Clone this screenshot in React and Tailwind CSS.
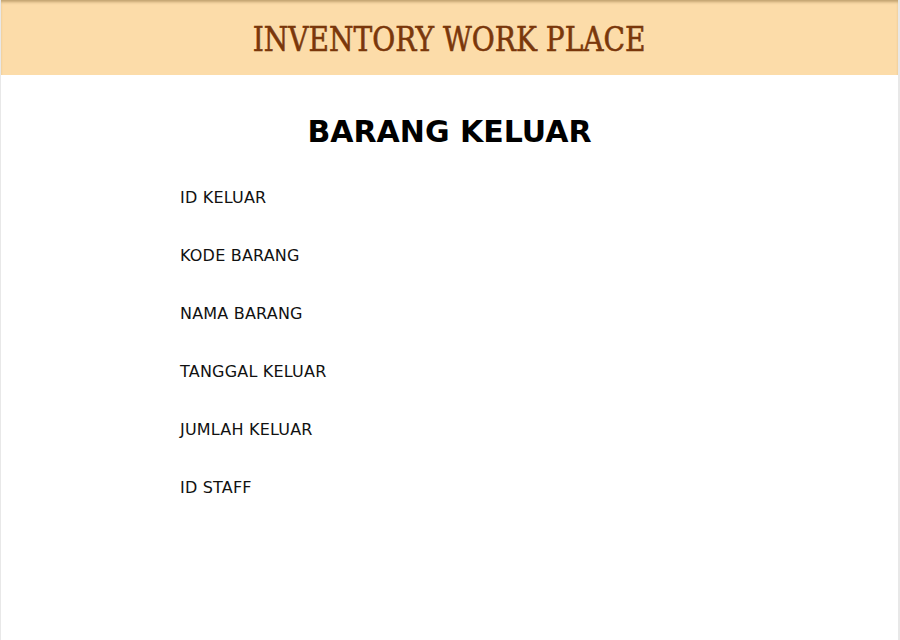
const FIELDS = ['ID KELUAR', 'KODE BARANG', 'NAMA BARANG', 'TANGGAL KELUAR', 'JUMLAH KELUAR', 'ID STAFF']

export default function App() {
  return (
    <div className="h-[640px] bg-white border-l border-r-2 border-[#e8e8e8] font-['DejaVu_Sans',Verdana,sans-serif] text-[#111]">
      {/* Header */}
      <header className="h-[75px] bg-[#fcdca9] shadow-[inset_0_3px_3px_-1px_rgba(120,90,40,0.45)] flex items-center justify-center pt-[4px]">
        <h1 className="inline-block font-['DejaVu_Serif',serif] text-[33px] text-[#7a370b] scale-x-[0.85] scale-y-[1] [-webkit-text-stroke:0.6px_#7a370b]">
          INVENTORY WORK PLACE
        </h1>
      </header>

      <main className="pt-[37px]">
        <h2 className="text-center text-[30px] font-bold leading-[40px] text-black">BARANG KELUAR</h2>
        <div className="pl-[179px] pt-[36px] flex flex-col gap-[39px]">
          {FIELDS.map((f) => (
            <div key={f} className="text-[16px] leading-[19px] tracking-[0.2px]">{f}</div>
          ))}
        </div>
      </main>
    </div>
  )
}
